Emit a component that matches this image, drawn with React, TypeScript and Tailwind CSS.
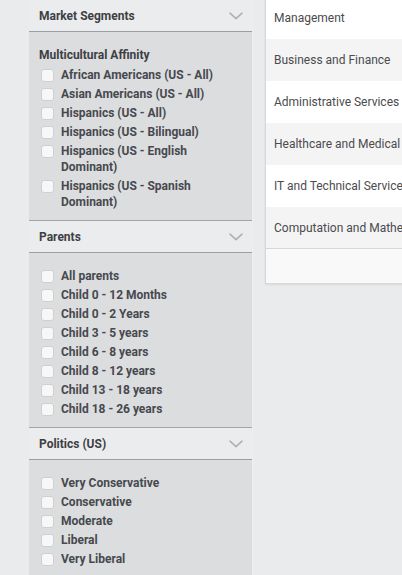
import React from "react";

type Section = {
  title: string;
  subtitle?: string;
  items: string[];
};

const sections: Section[] = [
  {
    title: "Market Segments",
    subtitle: "Multicultural Affinity",
    items: [
      "African Americans (US - All)",
      "Asian Americans (US - All)",
      "Hispanics (US - All)",
      "Hispanics (US - Bilingual)",
      "Hispanics (US - English Dominant)",
      "Hispanics (US - Spanish Dominant)",
    ],
  },
  {
    title: "Parents",
    items: [
      "All parents",
      "Child 0 - 12 Months",
      "Child 0 - 2 Years",
      "Child 3 - 5 years",
      "Child 6 - 8 years",
      "Child 8 - 12 years",
      "Child 13 - 18 years",
      "Child 18 - 26 years",
    ],
  },
  {
    title: "Politics (US)",
    items: ["Very Conservative", "Conservative", "Moderate", "Liberal", "Very Liberal"],
  },
];

const rows = [
  "Management",
  "Business and Finance",
  "Administrative Services",
  "Healthcare and Medical",
  "IT and Technical Services",
  "Computation and Mathematics",
];

function Chevron() {
  return (
    <svg width="14" height="8" viewBox="0 0 14 8" fill="none" className="mr-[9px]">
      <path d="M1 1.2 L7 6.6 L13 1.2" stroke="#aeb1b5" strokeWidth="1.6" strokeLinecap="round" strokeLinejoin="round" />
    </svg>
  );
}

function Checkbox() {
  return (
    <span className="mt-[2px] ml-[2px] h-[13px] w-[13px] shrink-0 rounded-[3px] border border-[#cfd0d2] bg-[#f7f7f8]" />
  );
}

export default function App() {
  return (
    <div
      className="flex h-[575px] w-[402px] overflow-hidden bg-[#eaebed] pl-[29px]"
      style={{ fontFamily: "Roboto, 'Liberation Sans', sans-serif" }}
    >
      <div className="flex w-[224px] shrink-0 flex-col border-r border-[#eeeff0]">
        {sections.map((s, si) => (
          <div key={s.title} className={si > 0 ? "border-t border-[#a3a4a6]" : ""}>
            <div className="flex h-[32px] items-center justify-between border-b border-[#9d9ea1] bg-[#ebecee] pl-[10px] pt-[1px]">
              <span className="text-[12px] font-bold text-[#3d3f43]">{s.title}</span>
              <Chevron />
            </div>
            <div className="flex flex-col gap-[3px] bg-[#dcdddf] pb-[10px] pl-[10px] pr-[8px] pt-[15px] text-[12px] font-bold leading-[16px] text-[#46494e]">
              {s.subtitle && <div className="mb-[1px] text-[#3d3f43]">{s.subtitle}</div>}
              {s.items.map((it) => (
                <label key={it} className="flex items-start gap-[7px]">
                  <Checkbox />
                  <span className="w-[165px]">{it}</span>
                </label>
              ))}
            </div>
          </div>
        ))}
      </div>
      <div className="ml-[12px] w-[200px] shrink-0">
        <div className="-mt-[3px] border-l border-b border-[#d6d7d9] bg-[#f9f9fa] shadow-[0_1px_2px_rgba(0,0,0,0.08)]">
          {rows.map((r, i) => (
            <div
              key={r}
              className={`flex h-[42px] items-center whitespace-nowrap pl-[8px] text-[12px] text-[#4a4b4e] ${
                i % 2 === 0 ? "bg-[#ffffff]" : "bg-[#f4f4f5]"
              } ${i === rows.length - 1 ? "border-b border-[#d6d7d9]" : ""}`}
            >
              {r}
            </div>
          ))}
          <div className="h-[34px] bg-[#f9f9fa]" />
        </div>
      </div>
    </div>
  );
}
